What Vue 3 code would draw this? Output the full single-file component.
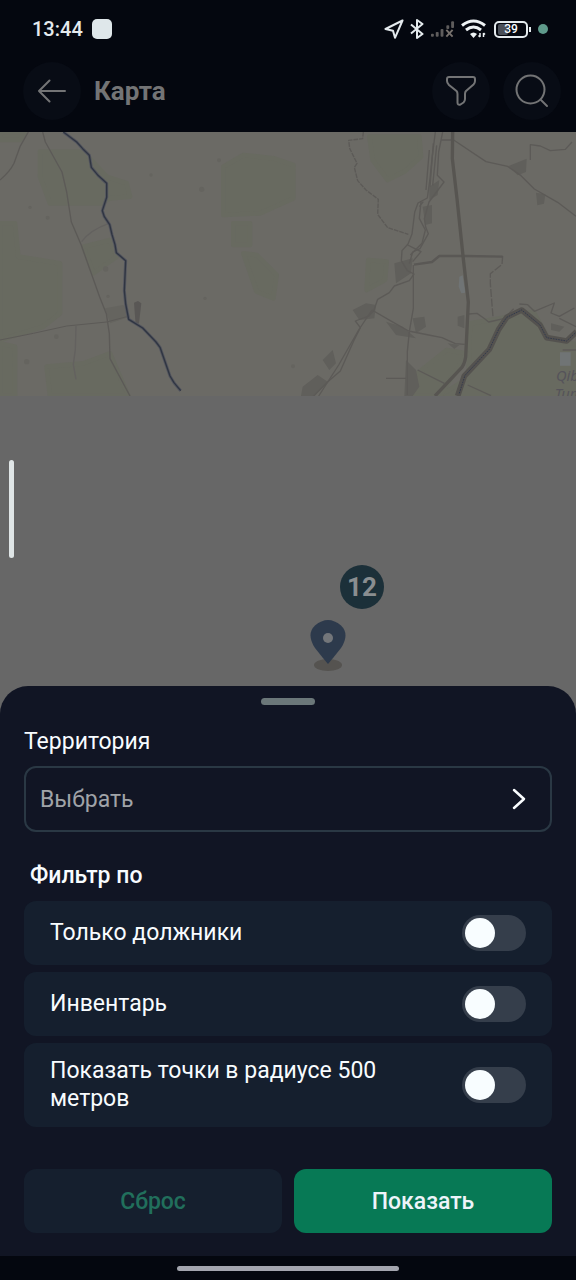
<template>
  <div class="screen">
    <header class="header">
      <div class="status-bar">
        <span class="time">13:44</span>
        <span class="app-badge"></span>
        <div class="status-icons">
          <svg width="20" height="20" viewBox="0 0 20 20" fill="none" stroke="#e4eaed" stroke-width="2" stroke-linejoin="round">
            <path d="M18.5 1.5 1.5 10l7.5 1.800 2 7z" />
          </svg>
          <svg width="14" height="20" viewBox="0 0 14 20" fill="none" stroke="#e4eaed" stroke-width="2" stroke-linejoin="round">
            <path d="M1 5.500 12.500 15 7 19V1l5.500 4L1 14.500" />
          </svg>
          <svg width="25" height="18" viewBox="0 0 26 18" fill="#5e5c5c">
            <rect x="1" y="14" width="3" height="3" rx="1" />
            <rect x="6" y="12" width="3" height="5" rx="1" />
            <rect x="11" y="9" width="3" height="8" rx="1" />
            <rect x="17" y="5" width="3" height="4" rx="1" />
            <rect x="22" y="1" width="3" height="7" rx="1" />
            <path d="m17 10 6.500 7m0-7L17 17" stroke="#77716d" stroke-width="2" />
          </svg>
          <svg width="25" height="20" viewBox="0 0 25 20" fill="none" stroke="#eef3f5" stroke-width="3">
            <path d="M1 6.500Q12.500-2.500 24 6.500M5 11q7.500-6 15 0" />
            <path d="M9 15q3.500-3 7 0l-3.500 4z" fill="#eef3f5" stroke="none" />
            <path d="M19 14v4m-1.500-1.500L19 18m3.500 0v-4m0 0 1.500 1.500" stroke-width="1.500" />
          </svg>
          <div class="battery">
            <span class="battery-fill"></span>
            <span class="battery-value">39</span>
          </div>
          <span class="privacy-dot"></span>
        </div>
      </div>

      <div class="toolbar">
        <button class="round-btn" type="button" aria-label="Назад">
          <svg width="28" height="24" viewBox="0 0 28 24" fill="none" stroke="#737475" stroke-width="2" stroke-linecap="round" stroke-linejoin="round">
            <path d="M27 12H1M11.500 1.500 1 12l10.500 10.500" />
          </svg>
        </button>
        <h1 class="title">Карта</h1>
        <button class="round-btn" type="button" aria-label="Фильтр">
          <svg width="30" height="30" viewBox="0 0 30 30" fill="none" stroke="#737475" stroke-width="2" stroke-linejoin="round">
            <path d="M3 1h24q2 0 2 2v2q0 2-1.500 3.500L20 15q-1 1-1 3v5q0 2-1.500 3.500l-3 2q-3 1-3-2V18q0-2-1-3L3 9Q1 7 1 5V3q0-2 2-2z" />
          </svg>
        </button>
        <button class="round-btn" type="button" aria-label="Поиск">
          <svg width="34" height="34" viewBox="0 0 34 34" fill="none" stroke="#737475" stroke-width="2" stroke-linecap="round">
            <circle cx="15.500" cy="15.500" r="14" />
            <path d="m26 26 6 6" />
          </svg>
        </button>
      </div>
    </header>

    <main class="map">
      <svg class="map-tiles" viewBox="0 6 1728 792" fill="none" stroke-linejoin="round">
        <rect y="6" width="1728" height="792" fill="#6b6a65" />
        <g fill="#686a60" stroke="#686a60" stroke-width="14">
          <path d="M120 65h130l70 75 60 20 10 40-60 5-25 15H150l-30-80z" />
          <path d="M0 280h45l10 100 125 20v150L130 590 0 630zM0 640l45 10v148H0zM140 710l110-10 80-30 55 128H150zM250 350l80-20 20 50-70 50z" />
          <path d="M0 6h75L60 30H0zM670 110l60-35 90 10 60 20v100l-100 45-110 5zM700 280h50v65h-50zM730 370l40 5 60 60-10 70-50-20z" />
          <path d="M1108 20h150l5 60-50 45-50 25-45-60zM1105 390l55 5-5 55-55 30zM1410 580l90-15 100-20 45 80 90 20v160h-430l100-60z" />
          <path d="m1240 740 100-80 60 10-80 128h-90z" />
        </g>
        <g fill="#65645f">
          <circle cx="605" cy="178" r="8" />
          <circle cx="317" cy="417" r="8" />
          <circle cx="324" cy="499" r="5" />
          <circle cx="169" cy="620" r="7" />
          <circle cx="80" cy="695" r="8" />
          <circle cx="143" cy="263" r="6" />
          <circle cx="90" cy="232" r="5" />
          <circle cx="615" cy="505" r="5" />
          <circle cx="657" cy="91" r="6" />
          <circle cx="453" cy="135" r="5" />
          <circle cx="879" cy="709" r="6" />
          <path d="m315 535 55-10 20 35-60 20z" />
        </g>
        <path d="m402 518 12-5 10 7-7 60-10 5z" fill="#595755" />

        <!-- roads and river in the west -->
        <g stroke="#5c5a57" stroke-width="4">
          <path d="M85 6 60 50 42 100Q30 125 0 150M128 6l8 30 50 90 14 60 14 90 30 70 55 155 20 50 9 60 2 75 60 112" />
          <path d="m0 630 100-20 100-22 120-12 60-16" stroke-width="3" />
          <path d="m228 588-2 70-6 45 8 45M245 335q25-35 82-55" stroke="#63615f" />
        </g>
        <path d="m190 6 40 30 18 20 20 20 6 36 20 24 26 24v42l-13 40 6 18 16 24 7 30 9 30 4 24 28 24-4 90 4 40 9 46 42 26 40 42 12 16 30 86 12 20 20 24" stroke="#53555f" stroke-width="9" />
        <path d="m190 6 40 30 18 20 20 20 6 36 20 24 26 24v42l-13 40 6 18 16 24 7 30 9 30 4 24 28 24-4 90 4 40 9 46 42 26 40 42 12 16 30 86 12 20 20 24" stroke="#2f3541" stroke-width="4" />

        <!-- eastern road network -->
        <g transform="translate(858 0)">
          <g fill="#605f5b">
            <path d="m668 108 54-22-2 40-25 10zM750 188l28 5-4 28-20 5zM430 170l30-20-5 45-25 15zM410 230l28-5v55l-20 5zM325 400l55-15-5 45-45 30zM380 565l35-5 5 30-30 20zM515 560l20-5v40l-20-8zM485 640l35 5-15 12zM200 540l40-20 30 5-5 40-45 5zM50 770l45-35 30 20-40 43H45zM360 690l30 30 10 50-20 28h-25zM795 580l40 10-15 15-25-5zM300 575l50 15 40 35-60-10zM110 690l30-30 10 40-20 20z" />
          </g>
          <path d="m520 440 10-4 8 52-12 2-8-20zM822 667h32v40h-32z" fill="#707475" />
          <g stroke="#5c5a57" stroke-width="4">
            <path d="m232 6-2 20-42 5 3 24 22 45-8 12 10 40 25 28 37 28-2 45 30 40 62 20" stroke-dasharray="14 3" />
            <path d="m448 6-10 80-6 60-8 58-28 15-10 28-8 65-12 30-18 20-2 30 18 30 20 10-14 20-45 16-15 20-35 20-12 35-15 15-40 15 15 20-20 40-40 90-35 30-60 60" />
            <path d="m470 6-12 60-4 70 20 20-45 60-14 50 4 25 8 20-25 45-22 10-10 35M465 30h38M430 60l-10 120M442 40l-10 130M452 46l-12 120" />
            <path d="m400 230 12-15M405 215l-5 50 18 35-10 40-35 35M365 345l20 10 20 10-25 30" />
            <path d="m258 540 60 35 50 28 60 12 40 8 40 18 28 2M382 405v130l-12 70-6 60v130M258 540l-40 60-60 105-60 93M300 745h60M395 720l80 40M545 765l70 32" />
            <path d="M503 30 600 95l65 14 40 28 40 40 70 40 55 42M733 90V44l30 4 30 14 45-4 20-22" />
            <path d="m548 552 25-2 20 14 15 12 45-10 30-30M700 522l25 2 20 20 60-25-10 30 25 10 45-25M820 565l50 25M830 660h40" />
            <path d="m650 378-2 25-35 28v30l8 100" stroke-dasharray="24 5" />
          </g>
          <path d="m384 404 54-8 22-18h75l115 2" stroke="#5a5855" stroke-width="7" />
          <path d="m500 6-1 80 14 120 20 190 14 120-8 165q-4 25-15 35l-77 82" stroke="#575551" stroke-width="10" />
          <path d="m515 798 20-60 75-80 28-60 24-36 45-22 55 45 20 38 60 10 30-28" stroke="#54524f" stroke-width="17" />
          <path d="m520 790 17-54 73-78 28-60 24-36 45-22 55 45 20 38 60 10 30-28" stroke="#333a4c" stroke-width="3" stroke-dasharray="5 3" />
          <g class="map-label">
            <text x="810" y="754">Qib</text>
            <text x="806" y="806">Tum</text>
          </g>
        </g>
      </svg>
      <span class="edge-handle"></span>
      <span class="cluster">12</span>
      <svg class="pin" width="36" height="52" viewBox="0 0 36 52">
        <ellipse cx="18" cy="45" rx="14" ry="6" fill="#555350" />
        <path d="M18 44Q12 37 5 28-4 14 5 5.500q13-11 26 0 9 8.500 0 22.500-7 9-13 16z" fill="#2d3a4c" />
        <circle cx="18" cy="18" r="5" fill="#73767a" />
      </svg>
    </main>

    <section class="sheet">
      <span class="grabber"></span>
      <label class="field-label" for="territory">Территория</label>
      <button id="territory" class="territory" type="button">
        <span>Выбрать</span>
        <svg width="14" height="22" viewBox="0 0 14 22" fill="none" stroke="#fafdff" stroke-width="2.500" stroke-linecap="round" stroke-linejoin="round">
          <path d="m2 2 10 9-10 9" />
        </svg>
      </button>

      <h2 class="filter-title">Фильтр по</h2>
      <div class="filters">
        <label v-for="filter in filters" :key="filter.id" class="filter-row">
          <span>{{ filter.label }}</span>
          <input v-model="filter.enabled" class="toggle" type="checkbox" role="switch" />
        </label>
      </div>

      <div class="actions">
        <button class="btn btn-reset" type="button" @click="resetFilters">Сброс</button>
        <button class="btn btn-apply" type="button">Показать</button>
      </div>
    </section>

    <div class="nav-bar">
      <span class="nav-pill"></span>
    </div>
  </div>
</template>

<script setup>
import { ref } from 'vue'

const filters = ref([
  { id: 'debtors', label: 'Только должники', enabled: false },
  { id: 'inventory', label: 'Инвентарь', enabled: false },
  { id: 'radius', label: 'Показать точки в радиусе 500 метров', enabled: false }
])

function resetFilters() {
  filters.value.forEach(filter => {
    filter.enabled = false
  })
}
</script>

<style>
body {
  margin: 0;
  background: #676767;
}
</style>

<style scoped>
.screen {
  display: flex;
  flex-direction: column;
  min-height: 100vh;
  background: #676767;
  font-family: Roboto, "Noto Sans", sans-serif;
  color: #f8fcff;
}

button {
  font-family: inherit;
  border: none;
  cursor: pointer;
}

.header {
  background: #04070f;
}

.status-bar {
  display: flex;
  align-items: center;
  height: 58px;
  padding: 0 28px 0 32px;
}

.time {
  font-size: 20px;
  font-weight: 500;
  color: #e4eaed;
}

.app-badge {
  width: 20px;
  height: 20px;
  margin-left: 9px;
  border-radius: 5px;
  background: #dfe7ea;
}

.status-icons {
  display: flex;
  align-items: center;
  gap: 6px;
  margin-left: auto;
}

.battery {
  position: relative;
  display: flex;
  align-items: center;
  justify-content: center;
  box-sizing: border-box;
  width: 34px;
  height: 17px;
  margin: 0 4px 0 2px;
  border: 2px solid #e4eaed;
  border-radius: 5px;
}

.battery::after {
  content: '';
  position: absolute;
  right: -5px;
  width: 2px;
  height: 5px;
  background: #e4eaed;
}

.battery-fill {
  position: absolute;
  left: 2px;
  top: 1px;
  bottom: 1px;
  width: 10px;
  border-radius: 2px;
  background: #4a4f58;
}

.battery-value {
  position: relative;
  font-size: 12px;
  font-weight: 500;
  color: #f8fcff;
}

.privacy-dot {
  width: 10px;
  height: 10px;
  border-radius: 50%;
  background: #5f9a8b;
}

.toolbar {
  display: flex;
  align-items: center;
  gap: 13px;
  padding: 4px 15px 12px 23px;
}

.title {
  flex: 1;
  margin: 0;
  font-size: 26px;
  font-weight: 700;
  color: #737475;
}

.round-btn {
  display: flex;
  align-items: center;
  justify-content: center;
  width: 58px;
  height: 58px;
  padding: 0;
  border-radius: 50%;
  background: #080c15;
}

.map {
  position: relative;
  flex: 1;
  min-height: 554px;
}

.map-tiles {
  display: block;
  width: 100%;
}

.map-label {
  font-size: 44px;
  font-style: italic;
  font-family: "Noto Sans", sans-serif;
  fill: #55535a;
}

.edge-handle {
  position: absolute;
  left: 9px;
  top: 328px;
  width: 5px;
  height: 98px;
  border-radius: 3px;
  background: #dfe5e6;
}

.cluster {
  position: absolute;
  left: 340px;
  top: 433px;
  width: 44px;
  border-radius: 50%;
  background: #1c3039;
  color: #8a8e90;
  font-size: 26px;
  font-weight: 700;
  line-height: 44px;
  text-align: center;
}

.pin {
  position: absolute;
  left: 310px;
  top: 488px;
}

.sheet {
  display: flex;
  flex-direction: column;
  padding: 12px 24px 23px;
  border-radius: 28px 28px 0 0;
  background: #111524;
  font-size: 23px;
  line-height: 28px;
}

.grabber {
  align-self: center;
  width: 54px;
  height: 7px;
  border-radius: 4px;
  background: #6b7779;
}

.field-label {
  margin-top: 23px;
}

.territory {
  display: flex;
  align-items: center;
  justify-content: space-between;
  height: 66px;
  margin-top: 10px;
  padding: 0 24px 0 14px;
  border: 2px solid #2a3844;
  border-radius: 12px;
  background: transparent;
  color: #a0a3a8;
  font-size: 23px;
}

.filter-title {
  margin: 30px 6px 11px;
  font-size: 23px;
  font-weight: 500;
}

.filters {
  display: flex;
  flex-direction: column;
  gap: 7px;
}

.filter-row {
  display: flex;
  align-items: center;
  justify-content: space-between;
  gap: 24px;
  padding: 14px 26px;
  border-radius: 12px;
  background: #151f2e;
  cursor: pointer;
}

.toggle {
  flex: none;
  appearance: none;
  width: 64px;
  height: 36px;
  margin: 0;
  padding: 3px;
  border-radius: 18px;
  background: #353e4b;
  cursor: pointer;
}

.toggle::before {
  content: '';
  display: block;
  width: 30px;
  height: 30px;
  border-radius: 50%;
  background: #f8fdff;
  transition: transform 0.2s;
}

.toggle:checked {
  background: #077955;
}

.toggle:checked::before {
  transform: translateX(28px);
}

.actions {
  display: flex;
  gap: 12px;
  margin-top: 42px;
}

.btn {
  flex: 1;
  height: 64px;
  border-radius: 12px;
  font-size: 23px;
  font-weight: 500;
}

.btn-reset {
  background: #151f2e;
  color: #216f5c;
}

.btn-apply {
  background: #077955;
  color: #edf4fa;
}

.nav-bar {
  display: flex;
  align-items: center;
  justify-content: center;
  height: 24px;
  background: #04070f;
}

.nav-pill {
  width: 222px;
  height: 5px;
  border-radius: 3px;
  background: #a3a5ae;
}
</style>
